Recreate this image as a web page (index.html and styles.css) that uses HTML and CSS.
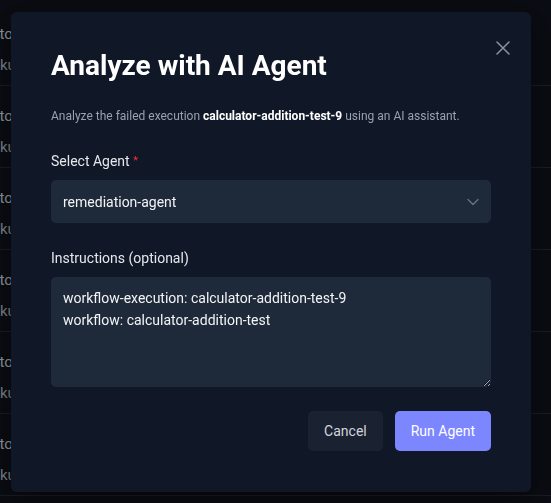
FILE: index.html
```html
<!DOCTYPE html>
<html>
<head>
  <title>Executions</title>
  <link rel="stylesheet" href="styles.css">
</head>
<body>
  <ul class="runs">
    <li class="run"><span class="run-name">auto</span><span class="run-meta">ku</span></li>
    <li class="run"><span class="run-name">auto</span><span class="run-meta">ku</span></li>
    <li class="run"><span class="run-name">auto</span><span class="run-meta">ku</span></li>
    <li class="run"><span class="run-name">auto</span><span class="run-meta">ku</span></li>
    <li class="run"><span class="run-name">auto</span><span class="run-meta">ku</span></li>
    <li class="run"><span class="run-name">auto</span><span class="run-meta">ku</span></li>
  </ul>

  <div class="backdrop">
    <div class="dialog">
      <button class="close-button" aria-label="Close">
        <svg width="14" height="14" viewBox="0 0 14 14" fill="none" stroke="currentColor" stroke-width="1.5" stroke-linecap="round">
          <path d="M1 1L13 13M13 1L1 13"/>
        </svg>
      </button>

      <h1 class="dialog-title">Analyze with AI Agent</h1>
      <p class="dialog-text">Analyze the failed execution <strong>calculator-addition-test-9</strong> using an AI assistant.</p>

      <div class="field">
        <label class="field-label">Select Agent <span class="required">*</span></label>
        <div class="select">
          <span>remediation-agent</span>
          <svg class="chevron" width="12" height="8" viewBox="0 0 12 8" fill="none" stroke="currentColor" stroke-width="1.3" stroke-linecap="round" stroke-linejoin="round">
            <path d="M1 1.5L6 6.5L11 1.5"/>
          </svg>
        </div>
      </div>

      <div class="field">
        <label class="field-label">Instructions (optional)</label>
        <textarea class="textarea">workflow-execution: calculator-addition-test-9
workflow: calculator-addition-test</textarea>
      </div>

      <div class="actions">
        <button class="button cancel-button">Cancel</button>
        <button class="button run-button">Run Agent</button>
      </div>
    </div>
  </div>
</body>
</html>
```

FILE: styles.css
```css
* {
  box-sizing: border-box;
}

body {
  margin: 0;
  height: 503px;
  overflow: hidden;
  background: #0b0e15;
  font-family: Roboto, "Liberation Sans", sans-serif;
}

.runs {
  list-style: none;
  margin: 0;
  padding: 4px 0 0;
}

.run {
  display: flex;
  flex-direction: column;
  height: 82px;
  padding-top: 21px;
  gap: 13px;
  border-bottom: 1px solid #1c2029;
  margin-left: -17px;
  font-size: 15px;
  line-height: 18px;
  color: #a3a7ae;
}

.run-meta {
  margin-left: 17px;
  color: #8e939b;
}

.backdrop {
  position: fixed;
  inset: 0;
  background: rgba(2, 4, 8, 0.12);
}

.dialog {
  position: absolute;
  left: 11px;
  top: 12px;
  width: 520px;
  height: 480px;
  padding: 37px 40px 40px;
  background: #101828;
  border-radius: 6px;
  box-shadow: 0 10px 30px rgba(0, 0, 0, 0.4);
}

.close-button {
  position: absolute;
  top: 29px;
  right: 21px;
  padding: 0;
  border: none;
  background: none;
  color: #8a92a0;
  display: flex;
  cursor: pointer;
}

.dialog-title {
  margin: 0;
  font-size: 28px;
  line-height: 34px;
  font-weight: 700;
  color: #ffffff;
}

.dialog-text {
  margin: 23px 0 0;
  font-size: 12px;
  line-height: 20px;
  color: #99a1af;
}

.dialog-text strong {
  color: #ffffff;
  font-weight: 700;
}

.field {
  display: flex;
  flex-direction: column;
  gap: 8px;
  margin-top: 24px;
}

.field-label {
  font-size: 14px;
  line-height: 22px;
  color: #e5e7eb;
}

.required {
  color: #fb2c36;
  font-size: 11px;
  vertical-align: top;
}

.select {
  display: flex;
  align-items: center;
  justify-content: space-between;
  height: 43px;
  padding: 0 12px;
  background: #1e2939;
  border-radius: 5px;
  font-size: 14px;
  color: #f3f4f6;
}

.chevron {
  color: #6a7282;
}

.textarea {
  display: block;
  width: 100%;
  height: 110px;
  padding: 10px 12px;
  border: none;
  border-radius: 5px;
  background: #1e2939;
  color: #f3f4f6;
  font-family: Roboto, "Liberation Sans", sans-serif;
  font-size: 14px;
  line-height: 22px;
  resize: vertical;
  outline: none;
  color-scheme: dark;
}

.actions {
  display: flex;
  justify-content: flex-end;
  gap: 12px;
  margin-top: 24px;
}

.button {
  height: 40px;
  padding: 0 16px;
  border: none;
  border-radius: 5px;
  font-family: Roboto, "Liberation Sans", sans-serif;
  font-size: 14px;
  cursor: pointer;
}

.cancel-button {
  background: #1a2131;
  color: #d1d5dc;
}

.run-button {
  background: #7c86ff;
  color: #ffffff;
}
```
